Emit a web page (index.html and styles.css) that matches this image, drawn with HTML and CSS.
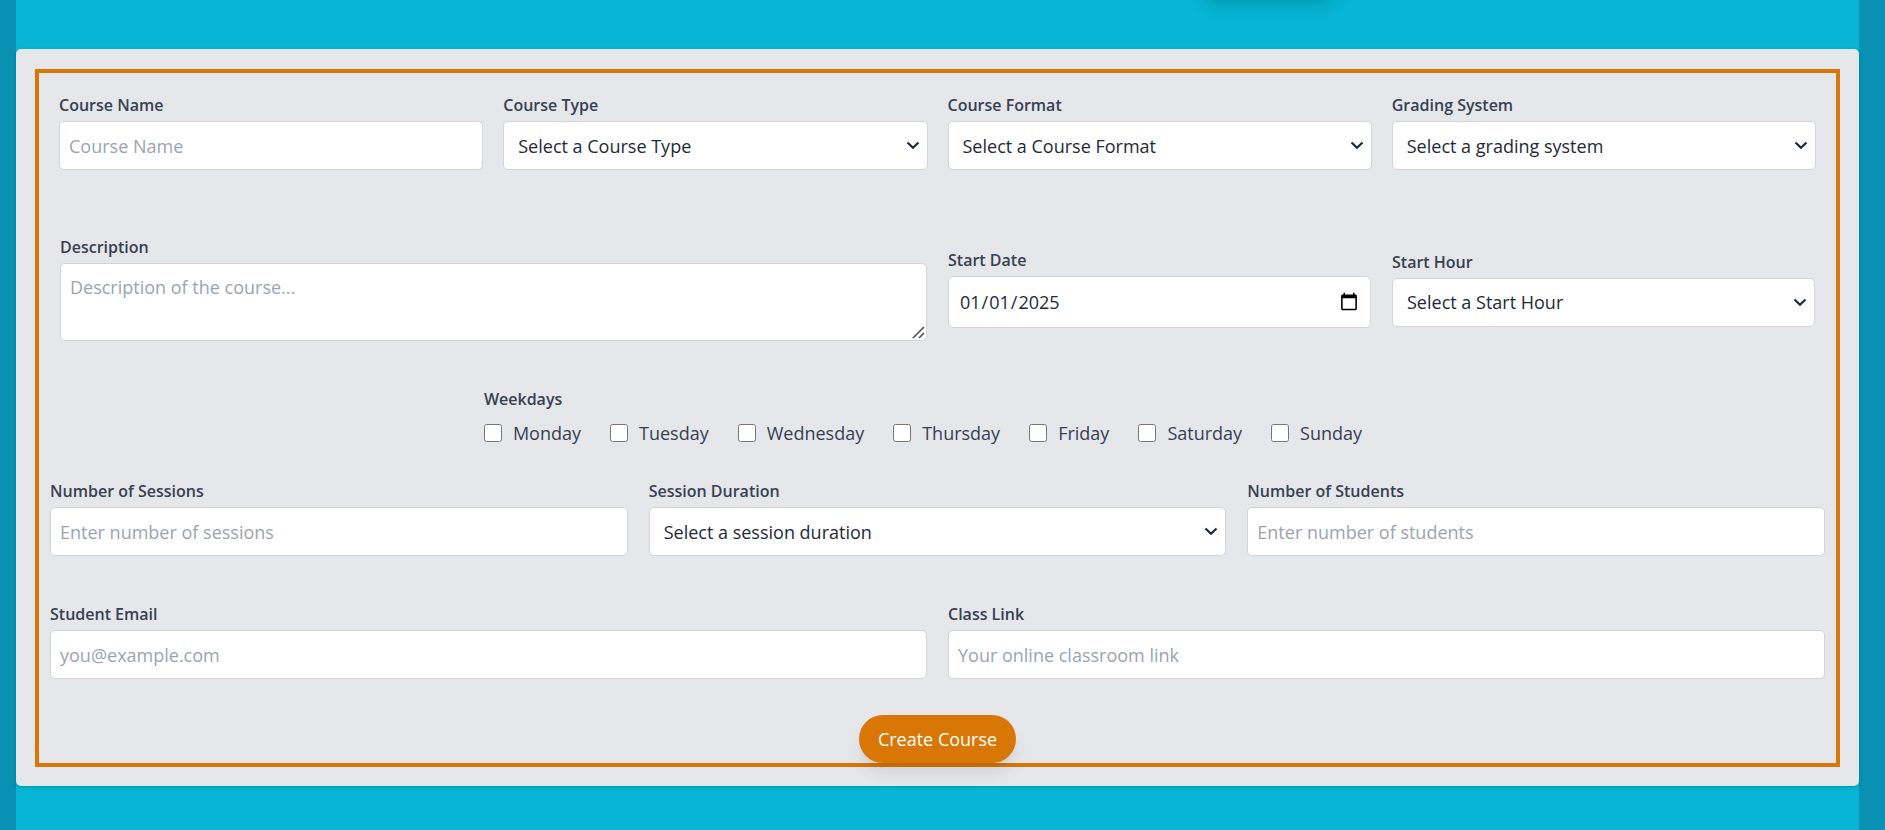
FILE: index.html
```html
<!DOCTYPE html>
<html lang="en">
<head>
<meta charset="utf-8">
<meta name="viewport" content="width=device-width, initial-scale=1">
<title>Create Course</title>
<link rel="stylesheet" href="styles.css">
</head>
<body>
<main class="page">
  <div class="tab-shadow"></div>
  <section class="card">
    <form class="course-form">
      <div class="row row-four">
        <div class="field">
          <label for="name">Course Name</label>
          <input class="control" id="name" type="text" placeholder="Course Name">
        </div>
        <div class="field">
          <label for="type">Course Type</label>
          <select class="control" id="type"><option>Select a Course Type</option></select>
        </div>
        <div class="field">
          <label for="format">Course Format</label>
          <select class="control" id="format"><option>Select a Course Format</option></select>
        </div>
        <div class="field">
          <label for="grading">Grading System</label>
          <select class="control" id="grading"><option>Select a grading system</option></select>
        </div>
      </div>

      <div class="row row-details">
        <div class="field field-wide">
          <label for="description">Description</label>
          <textarea class="control" id="description" placeholder="Description of the course..."></textarea>
        </div>
        <div class="field">
          <label for="date">Start Date</label>
          <input class="control control-date" id="date" type="date" value="2025-01-01">
        </div>
        <div class="field">
          <label for="hour">Start Hour</label>
          <select class="control" id="hour"><option>Select a Start Hour</option></select>
        </div>
      </div>

      <fieldset class="weekdays">
        <legend>Weekdays</legend>
        <div class="days">
          <label class="day"><input type="checkbox">Monday</label>
          <label class="day"><input type="checkbox">Tuesday</label>
          <label class="day"><input type="checkbox">Wednesday</label>
          <label class="day"><input type="checkbox">Thursday</label>
          <label class="day"><input type="checkbox">Friday</label>
          <label class="day"><input type="checkbox">Saturday</label>
          <label class="day"><input type="checkbox">Sunday</label>
        </div>
      </fieldset>

      <div class="row row-three">
        <div class="field">
          <label for="sessions">Number of Sessions</label>
          <input class="control" id="sessions" type="text" inputmode="numeric" placeholder="Enter number of sessions">
        </div>
        <div class="field">
          <label for="duration">Session Duration</label>
          <select class="control" id="duration"><option>Select a session duration</option></select>
        </div>
        <div class="field">
          <label for="students">Number of Students</label>
          <input class="control" id="students" type="text" inputmode="numeric" placeholder="Enter number of students">
        </div>
      </div>

      <div class="row row-two">
        <div class="field">
          <label for="email">Student Email</label>
          <input class="control" id="email" type="email" placeholder="you@example.com">
        </div>
        <div class="field">
          <label for="link">Class Link</label>
          <input class="control" id="link" type="url" placeholder="Your online classroom link">
        </div>
      </div>

      <button class="submit" type="submit">Create Course</button>
    </form>
  </section>
</main>
</body>
</html>
```
FILE: styles.css
```css
*, *::before, *::after {
  box-sizing: border-box;
}

body {
  margin: 0;
  background: #0891b2;
  color: #1f2937;
  font-family: "Open Sans", "Noto Sans", sans-serif;
  font-size: 18px;
  line-height: 28px;
}

.page {
  position: relative;
  min-height: 100vh;
  margin: 0 26px 0 16px;
  padding: 49px 0 40px;
  background: #06b6d4;
  overflow: clip;
  overflow-clip-margin: 4px;
}

/* Bottom edge of the tab above the form */
.tab-shadow {
  position: absolute;
  bottom: 100%;
  left: 68%;
  width: 148px;
  height: 48px;
  border-radius: 24px;
  transform: translateX(-50%);
  box-shadow: 0 12px 18px -4px rgba(0, 0, 0, 0.1), 0 5px 7px -5px rgba(0, 0, 0, 0.1);
}

.card {
  padding: 20px 19px 19px;
  border-radius: 5px;
  background: #e5e7eb;
  box-shadow: 0 1px 4px rgba(0, 0, 0, 0.1), 0 1px 2px rgba(0, 0, 0, 0.1);
}

.course-form {
  display: flex;
  flex-direction: column;
  border: 4px solid #d97706;
}

.row {
  display: grid;
  align-items: center;
}

.row-four {
  grid-template-columns: repeat(4, 1fr);
  gap: 20px;
  padding: 20px 20px 0;
}

.row-details {
  grid-template-columns: repeat(4, 1fr);
  gap: 21px;
  padding: 65px 21px 46px;
}

.row-three {
  grid-template-columns: repeat(3, 1fr);
  gap: 21px;
  padding: 32px 11px 0;
}

.row-two {
  grid-template-columns: repeat(2, 1fr);
  gap: 21px;
  padding: 46px 11px 36px;
}

.field {
  display: flex;
  flex-direction: column;
  gap: 4px;
  min-width: 0;
}

.field-wide {
  grid-column: span 2;
}

.field label,
.weekdays legend {
  color: #374151;
  font-size: 16px;
  font-weight: 600;
  line-height: 24px;
}

.control {
  width: 100%;
  height: 49px;
  margin: 0;
  padding: 0 9px;
  border: 1px solid #d1d5db;
  border-radius: 5px;
  background: #fff;
  color: #1f2937;
  font: inherit;
}

.control::placeholder {
  color: #9ca3af;
  opacity: 1;
}

select.control {
  appearance: none;
  padding: 0 32px 0 14px;
  background: #fff url("data:image/svg+xml,%3Csvg xmlns='http://www.w3.org/2000/svg' width='14' height='9' viewBox='0 0 14 9'%3E%3Cpath d='M1.5 1.5 7 6.8l5.500-5.300' fill='none' stroke='%231f2937' stroke-width='2.200'/%3E%3C/svg%3E") no-repeat right 7px center;
}

textarea.control {
  display: block;
  height: 78px;
  padding: 9px;
  resize: vertical;
}

textarea.control::-webkit-resizer {
  background: url("data:image/svg+xml,%3Csvg xmlns='http://www.w3.org/2000/svg' width='15' height='15' viewBox='0 0 15 15'%3E%3Cpath d='M2 13 13 2M8 13l5-5' fill='none' stroke='%23555' stroke-width='1.700'/%3E%3C/svg%3E") no-repeat right bottom;
}

.control-date {
  height: 52px;
  padding: 0 11px 0 10px;
}

.control-date::-webkit-calendar-picker-indicator {
  width: 20px;
  height: 20px;
  padding: 0;
}

.weekdays {
  align-self: center;
  margin: 0;
  padding: 0;
  border: 0;
}

.weekdays legend {
  padding: 0;
}

.days {
  display: flex;
  flex-wrap: wrap;
  padding-top: 8px;
}

.day {
  display: flex;
  align-items: center;
  gap: 11px;
  margin-right: 29px;
  color: #374151;
}

.day input {
  width: 18px;
  height: 18px;
  margin: 0;
}

.submit {
  align-self: center;
  height: 48px;
  padding: 0 19px;
  border: 0;
  border-radius: 24px;
  background: #d97706;
  color: #fff;
  font: inherit;
  box-shadow: 0 12px 18px -4px rgba(0, 0, 0, 0.1), 0 5px 7px -5px rgba(0, 0, 0, 0.1);
}
```
